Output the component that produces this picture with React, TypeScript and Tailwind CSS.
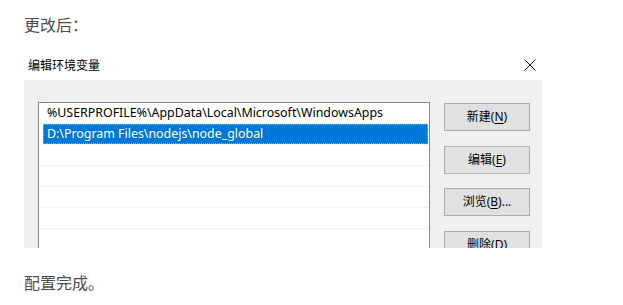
import React from "react";

const latin = '"Noto Sans", "Noto Sans CJK SC", sans-serif';
const cjk = '"Noto Sans CJK SC", "Noto Sans", sans-serif';

function Btn({ label, k, suffix = "", className = "" }: { label: string; k: string; suffix?: string; className?: string }) {
  return (
    <div
      className={`shrink-0 w-[86px] h-[28px] bg-[#e1e1e1] border border-[#adadad] flex items-center justify-center text-[12px] text-black leading-none ${className}`}
      style={{ fontFamily: latin }}
    >
      <span>
        {label}(<span className="underline underline-offset-2">{k}</span>){suffix}
      </span>
    </div>
  );
}

export default function App() {
  const rows = [0, 1, 2, 3, 4, 5, 6];
  return (
    <div className="w-[623px] h-[305px] bg-white overflow-hidden flex flex-col" style={{ fontFamily: cjk }}>
      <div className="pl-[24px] pt-[12px] h-[50px] text-[16px] leading-[24px] text-[#4d4d4d]">更改后：</div>
      <div className="ml-[24px] w-[518px] flex flex-col">
        <div className="h-[30px] flex items-center justify-between bg-white">
          <span className="pl-[4px] text-[12px] text-black">编辑环境变量</span>
          <svg width="12" height="12" viewBox="0 0 12 12" className="mr-[6px]">
            <path d="M0.5 0.5 L11.5 11.5 M11.5 0.5 L0.5 11.5" stroke="#111" strokeWidth="1" />
          </svg>
        </div>
        <div className="h-[168px] bg-[#f0f0f0] overflow-hidden flex pt-[22px] pl-[14px]">
          <div
            className="w-[392px] h-[200px] shrink-0 bg-white border border-[#828790] pl-[1px] pr-[1px] text-[12.4px]"
            style={{ fontFamily: latin }}
          >
            <div className="h-[21px] border-b border-[#f0f0f0] flex items-center pl-[7px] text-black leading-none">
              %USERPROFILE%\AppData\Local\Microsoft\WindowsApps
            </div>
            <div className="h-[21px] border-b border-[#f0f0f0] flex">
              <div className="ml-[3px] flex-1 bg-[#0078d7] border border-dotted border-[#f0a030] flex items-center pl-[3px] text-white leading-none">
                D:\Program Files\nodejs\node_global
              </div>
            </div>
            {rows.map((r) => (
              <div key={r} className="h-[21px] border-b border-[#f0f0f0]" />
            ))}
          </div>
          <div className="ml-[14px] flex flex-col">
            <Btn label="新建" k="N" className="mt-[1px]" />
            <Btn label="编辑" k="E" className="mt-[15px]" />
            <Btn label="浏览" k="B" suffix="..." className="mt-[14px]" />
            <Btn label="删除" k="D" className="mt-[15px]" />
          </div>
        </div>
      </div>
      <div className="pl-[24px] pt-[22px] text-[16px] leading-[24px] text-[#4d4d4d]">配置完成。</div>
    </div>
  );
}
